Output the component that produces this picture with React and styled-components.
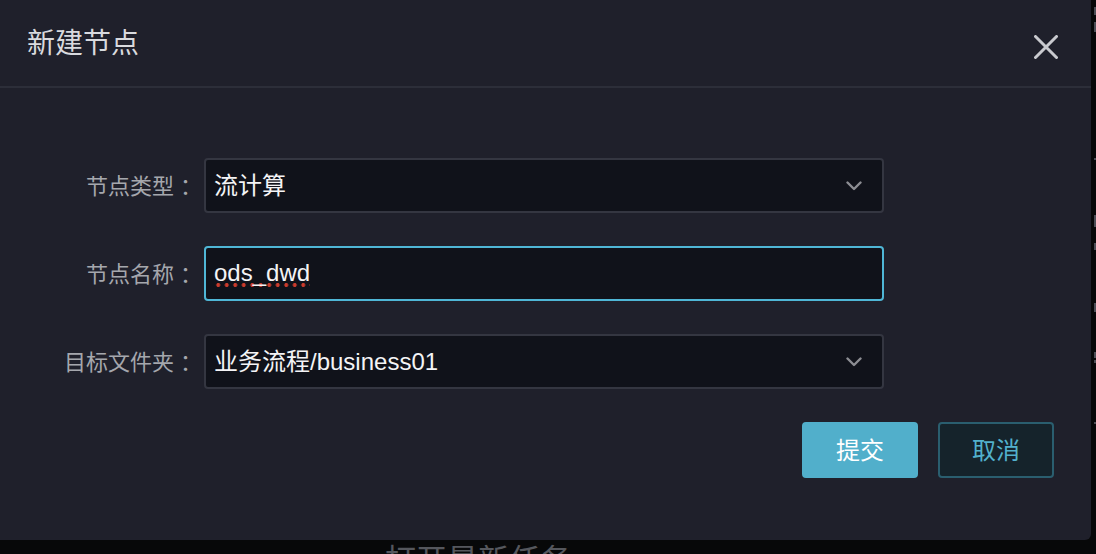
import React from "react";
import styled, { createGlobalStyle } from "styled-components";

const Global = createGlobalStyle`
  html, body { margin: 0; padding: 0; background: #070809; }
  body { font-family: "Liberation Sans", "Noto Sans CJK SC", sans-serif; }
  #root { width: 1096px; height: 554px; overflow: hidden; }
`;

const Page = styled.div`
  width: 1096px;
  height: 554px;
  background: #070809;
  overflow: hidden;
`;

const TopRow = styled.div`
  display: flex;
  height: 540px;
`;

const Dialog = styled.div`
  width: 1091px;
  height: 540px;
  background: #1f202b;
  border-radius: 0 0 6px 0;
  display: flex;
  flex-direction: column;
`;

const Header = styled.div`
  height: 88px;
  box-sizing: border-box;
  padding: 0 33px 4px 27px;
  display: flex;
  align-items: center;
  justify-content: space-between;
  border-bottom: 2px solid #2c2e39;
`;

const Title = styled.div`
  font-family: "Noto Sans CJK SC", sans-serif;
  font-size: 28px;
  line-height: 28px;
  color: #d9dade;
`;

const CloseButton = styled.button`
  width: 24px;
  height: 24px;
  margin-top: 11px;
  padding: 0;
  border: 0;
  background: transparent;
  display: flex;
  cursor: pointer;
`;

const Body = styled.div`
  padding: 70px 37px 0 0;
  display: flex;
  flex-direction: column;
`;

const Form = styled.div`
  display: grid;
  grid-template-columns: 202px 680px;
  column-gap: 2px;
  row-gap: 33px;
  grid-auto-rows: 55px;
`;

const Label = styled.div`
  font-family: "Noto Sans CJK SC", sans-serif;
  font-size: 22px;
  line-height: 24px;
  padding-bottom: 4px;
  color: #a5a7ad;
  display: flex;
  align-items: center;
  justify-content: flex-end;
  white-space: nowrap;
`;

const Colon = styled.span`
  margin-left: 6px;
`;

const Field = styled.div`
  box-sizing: border-box;
  height: 55px;
  border: 2px solid ${(p) => (p.$focused ? "#4fb6d6" : "#343641")};
  border-radius: 4px;
  background: #10121a;
  padding: 0 20px 0 8px;
  display: flex;
  align-items: center;
  justify-content: space-between;
  font-size: 24px;
  color: #f4f4f6;
`;

const Value = styled.span`
  line-height: 26px;
`;

const Misspelled = styled.span`
  display: inline-block;
  line-height: 26px;
  padding-bottom: 1px;
  background-image: radial-gradient(circle, #cc3b2c 1.7px, transparent 2.2px);
  background-size: 8.5px 4px;
  background-repeat: repeat-x;
  background-position: 0 bottom;
`;

const Footer = styled.div`
  margin-top: 33px;
  display: flex;
  justify-content: flex-end;
  gap: 20px;
`;

const Button = styled.button`
  width: 116px;
  height: 56px;
  box-sizing: border-box;
  border-radius: 4px;
  font-family: "Noto Sans CJK SC", sans-serif;
  font-size: 24px;
  line-height: 24px;
  padding: 0 0 3px;
  cursor: pointer;
  border: 2px solid ${(p) => (p.$primary ? "#51afcb" : "#2a5e6f")};
  background: ${(p) => (p.$primary ? "#51afcb" : "#15232b")};
  color: ${(p) => (p.$primary ? "#ffffff" : "#52b1cd")};
`;

const Strip = styled.div`
  flex: 1;
  display: flex;
  flex-direction: column;
  align-items: flex-end;
`;

const Tick = styled.div`
  width: 2px;
  background: #4b4d55;
  margin-top: ${(p) => p.$gap}px;
  height: ${(p) => p.$h}px;
`;

const BottomHint = styled.div`
  padding-left: 385px;
  font-family: "Noto Sans CJK SC", sans-serif;
  font-size: 31px;
  line-height: 31px;
  margin-top: 2px;
  color: #55575d;
  white-space: nowrap;
`;

const Chevron = () => (
  <svg width="16" height="10" viewBox="0 0 16 10" fill="none">
    <path d="M1.5 1.5 L8 8 L14.5 1.5" stroke="#8c8d93" strokeWidth="2.4" strokeLinecap="round" strokeLinejoin="round" />
  </svg>
);

const CloseIcon = () => (
  <svg width="24" height="24" viewBox="0 0 24 24" fill="none">
    <path d="M1.5 1.5 L22.5 22.5 M22.5 1.5 L1.5 22.5" stroke="#c9cacf" strokeWidth="3" strokeLinecap="round" />
  </svg>
);

const ticks = [
  [7, 8],
  [7, 10],
  [126, 2],
  [55, 12],
  [16, 7],
  [53, 9],
  [40, 6],
  [2, 3],
  [59, 2],
];

const FieldLabel = ({ children }) => (
  <Label>
    {children}
    <Colon>：</Colon>
  </Label>
);

export default function App() {
  return (
    <Page>
      <Global />
      <TopRow>
        <Dialog>
          <Header>
            <Title>新建节点</Title>
            <CloseButton aria-label="关闭">
              <CloseIcon />
            </CloseButton>
          </Header>
          <Body>
            <Form>
              <FieldLabel>节点类型</FieldLabel>
              <Field>
                <Value>流计算</Value>
                <Chevron />
              </Field>
              <FieldLabel>节点名称</FieldLabel>
              <Field $focused>
                <Misspelled>ods_dwd</Misspelled>
              </Field>
              <FieldLabel>目标文件夹</FieldLabel>
              <Field>
                <Value>业务流程/business01</Value>
                <Chevron />
              </Field>
            </Form>
            <Footer>
              <Button $primary>提交</Button>
              <Button>取消</Button>
            </Footer>
          </Body>
        </Dialog>
        <Strip>
          {ticks.map(([g, h], i) => (
            <Tick key={i} $gap={g} $h={h} />
          ))}
        </Strip>
      </TopRow>
      <BottomHint>打开最新任务</BottomHint>
    </Page>
  );
}
